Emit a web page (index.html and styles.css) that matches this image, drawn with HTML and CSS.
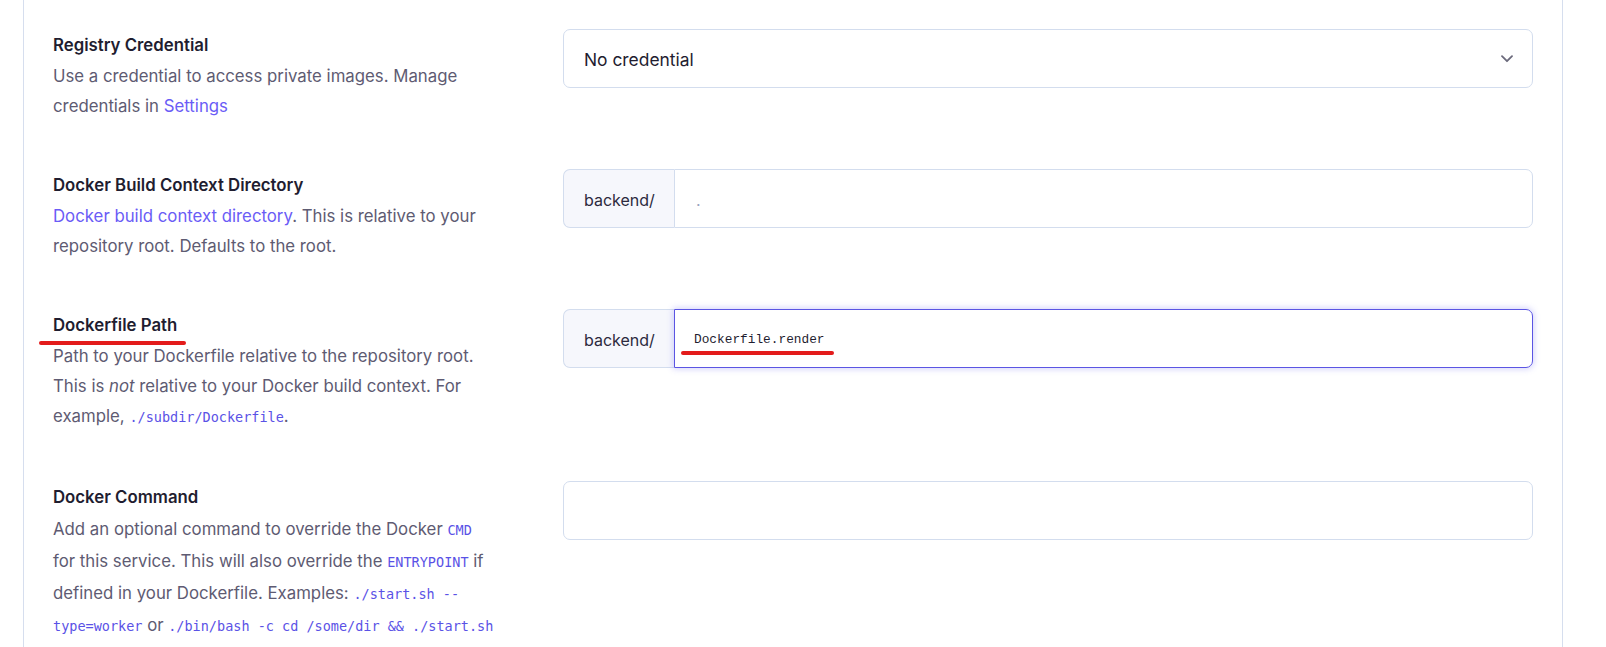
FILE: index.html
```html
<!DOCTYPE html>
<html lang="en">
<head>
<meta charset="utf-8">
<title>Docker settings</title>
<link rel="stylesheet" href="styles.css">
</head>
<body>
<main class="panel">
  <section class="field">
    <div class="field-info">
      <h3 class="field-title">Registry Credential</h3>
      <p class="field-desc">Use a credential to access private images. Manage credentials in <a class="link" href="#">Settings</a></p>
    </div>
    <div class="field-control">
      <div class="select">
        <span class="select-value">No credential</span>
        <svg class="chevron" width="12" height="8" viewBox="0 0 12 8" aria-hidden="true"><path d="M1 1.2 6 6.2 11 1.2" fill="none" stroke="#6b6a7c" stroke-width="1.8" stroke-linecap="round" stroke-linejoin="round"/></svg>
      </div>
    </div>
  </section>

  <section class="field">
    <div class="field-info">
      <h3 class="field-title">Docker Build Context Directory</h3>
      <p class="field-desc"><a class="link" href="#">Docker build context directory</a>. This is relative to your repository root. Defaults to the root.</p>
    </div>
    <div class="field-control">
      <div class="input-group">
        <span class="addon">backend/</span>
        <span class="input placeholder">.</span>
      </div>
    </div>
  </section>

  <section class="field field-loose">
    <div class="field-info">
      <h3 class="field-title"><span class="annotated">Dockerfile Path<span class="mark mark-title"></span></span></h3>
      <p class="field-desc">Path to your Dockerfile relative to the repository root. This is <em>not</em> relative to your Docker build context. For example, <code>./subdir/Dockerfile</code>.</p>
    </div>
    <div class="field-control">
      <div class="input-group">
        <span class="addon">backend/</span>
        <span class="input focused mono"><span class="annotated">Dockerfile.render<span class="mark mark-input"></span></span></span>
      </div>
    </div>
  </section>

  <section class="field">
    <div class="field-info">
      <h3 class="field-title">Docker Command</h3>
      <p class="field-desc tall">Add an optional command to override the Docker <code>CMD</code> for this service. This will also override the <code>ENTRYPOINT</code> if defined in your Dockerfile. Examples: <code>./start.sh --type=worker</code> or <code>./bin/bash -c cd /some/dir &amp;&amp; ./start.sh</code></p>
    </div>
    <div class="field-control">
      <div class="input-single"></div>
    </div>
  </section>
</main>
</body>
</html>
```

FILE: styles.css
```css
* { box-sizing: border-box; }

html, body {
  margin: 0;
  padding: 0;
  background: #ffffff;
}

body {
  font-family: Inter, "Noto Sans", sans-serif;
  color: #1f1d30;
  overflow: hidden;
}

.panel {
  margin-left: 23px;
  width: 1540px;
  min-height: 647px;
  border-left: 1px solid #d6deee;
  border-right: 1px solid #d6deee;
  padding: 29px 29px 0 29px;
}

.field {
  display: flex;
  gap: 66px;
  align-items: flex-start;
  margin-bottom: 48px;
}

.field-loose { margin-bottom: 50px; }

.field-info {
  width: 444px;
  flex: none;
  padding-top: 4px;
}

.field-title {
  margin: 0 0 4px 0;
  font-size: 16.8px;
  line-height: 24px;
  font-weight: 600;
  color: #1f1d30;
}

.field-desc {
  margin: 0;
  font-size: 16.8px;
  line-height: 30px;
  color: #5e5b72;
}

.field-desc.tall { line-height: 32px; }

.link {
  color: #6a5cf6;
  text-decoration: none;
}

code {
  font-family: "DejaVu Sans Mono", "Liberation Mono", monospace;
  font-size: 13.5px;
  line-height: 1;
  color: #5a52e6;
}

.field-control {
  flex: 1;
}

.select {
  height: 59px;
  border: 1px solid #d3ddee;
  border-radius: 7px;
  display: flex;
  align-items: center;
  justify-content: space-between;
  padding: 2px 19px 0 20px;
  font-size: 17.4px;
  color: #1f1d30;
}

.chevron { display: block; margin-top: -2px; }

.input-group {
  display: flex;
  height: 59px;
}

.addon {
  width: 111px;
  flex: none;
  display: flex;
  align-items: center;
  padding: 2px 0 0 20px;
  background: #f6f7fc;
  border: 1px solid #d3ddee;
  border-right: none;
  border-radius: 7px 0 0 7px;
  font-size: 16px;
  color: #2c2a3e;
}

.input {
  flex: 1;
  display: flex;
  align-items: center;
  padding: 2px 0 0 19px;
  border: 1px solid #d3ddee;
  border-radius: 0 7px 7px 0;
  font-size: 16px;
}

.input.placeholder {
  color: #9aa3bd;
  padding-left: 21px;
}

.input.focused {
  border-color: #5b55e3;
  box-shadow: 0 0 6px 1px rgba(98, 92, 240, 0.28);
}

.mono {
  font-family: "Liberation Mono", "DejaVu Sans Mono", monospace;
  font-size: 12.8px;
  color: #1f1d30;
}

.input-single {
  height: 59px;
  border: 1px solid #d3ddee;
  border-radius: 7px;
}

.annotated {
  position: relative;
  display: inline-block;
}

.mark {
  position: absolute;
  height: 4px;
  border-radius: 2px;
  background: #e31b1b;
}

.mark-title {
  left: -14px;
  right: -9px;
  bottom: -8px;
}

.mark-input {
  left: -13px;
  right: -9px;
  bottom: -8px;
}
```
